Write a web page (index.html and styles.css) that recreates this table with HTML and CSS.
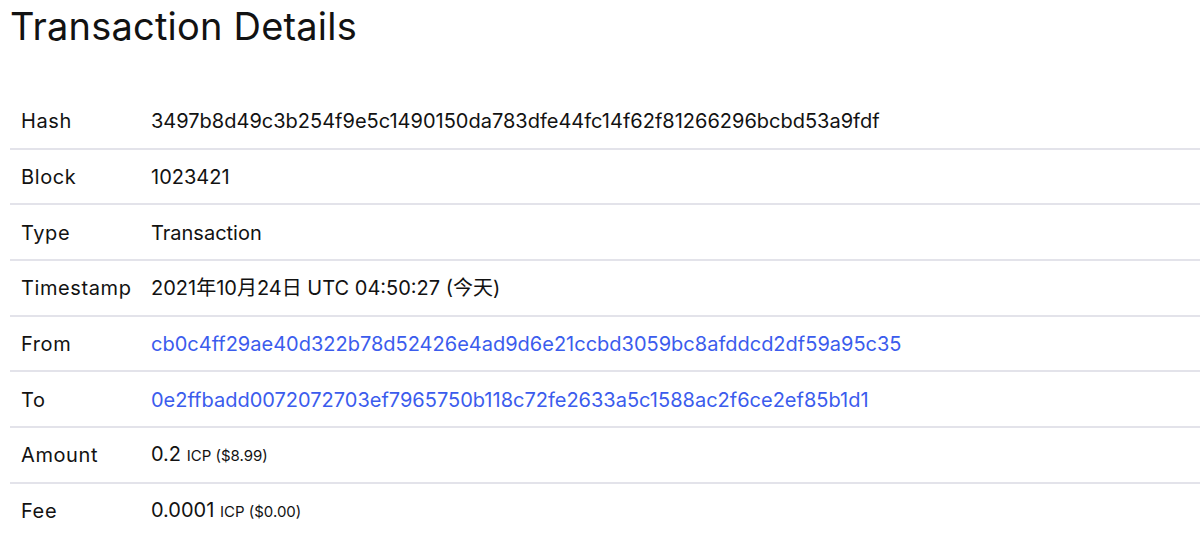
FILE: index.html
```html
<!DOCTYPE html>
<html>
<head>
<meta charset="utf-8">
<link rel="stylesheet" href="styles.css">
</head>
<body>
<h1 class="title">Transaction Details</h1>
<table class="details">
  <tr><td class="label">Hash</td><td class="value">3497b8d49c3b254f9e5c1490150da783dfe44fc14f62f81266296bcbd53a9fdf</td></tr>
  <tr><td class="label">Block</td><td class="value">1023421</td></tr>
  <tr><td class="label">Type</td><td class="value">Transaction</td></tr>
  <tr><td class="label">Timestamp</td><td class="value">2021年10月24日 UTC 04:50:27 (今天)</td></tr>
  <tr><td class="label">From</td><td class="value"><a class="link" href="#">cb0c4ff29ae40d322b78d52426e4ad9d6e21ccbd3059bc8afddcd2df59a95c35</a></td></tr>
  <tr><td class="label">To</td><td class="value"><a class="link" href="#">0e2ffbadd0072072703ef7965750b118c72fe2633a5c1588ac2f6ce2ef85b1d1</a></td></tr>
  <tr><td class="label">Amount</td><td class="value">0.2 <span class="unit">ICP ($8.99)</span></td></tr>
  <tr><td class="label">Fee</td><td class="value">0.0001 <span class="unit">ICP ($0.00)</span></td></tr>
</table>
</body>
</html>
```
FILE: styles.css
```css
html, body {
  margin: 0;
  padding: 0;
  background: #ffffff;
}
body {
  font-family: "Inter", "Noto Sans CJK SC", sans-serif;
  color: #121212;
  padding: 0 0 0 10px;
  overflow: hidden;
}
.title {
  font-size: 38px;
  font-weight: 400;
  margin: 0;
  padding-top: 3px;
  line-height: 46px;
  height: 93px;
  box-sizing: border-box;
  letter-spacing: 0.2px;
}
.details {
  border-collapse: collapse;
  width: 1200px;
}
.details tr {
  height: 55.67px;
  border-bottom: 2px solid #e3e3ea;
}
.details td {
  padding: 1px 0 0 0;
  font-size: 20px;
  line-height: 26px;
  vertical-align: middle;
}
.label {
  width: 130px;
  padding-left: 11px !important;
  letter-spacing: 0.6px;
}
.value {
  white-space: nowrap;
}
.link {
  color: #3b5ced;
  text-decoration: none;
}
.unit {
  font-size: 15px;
}
```
